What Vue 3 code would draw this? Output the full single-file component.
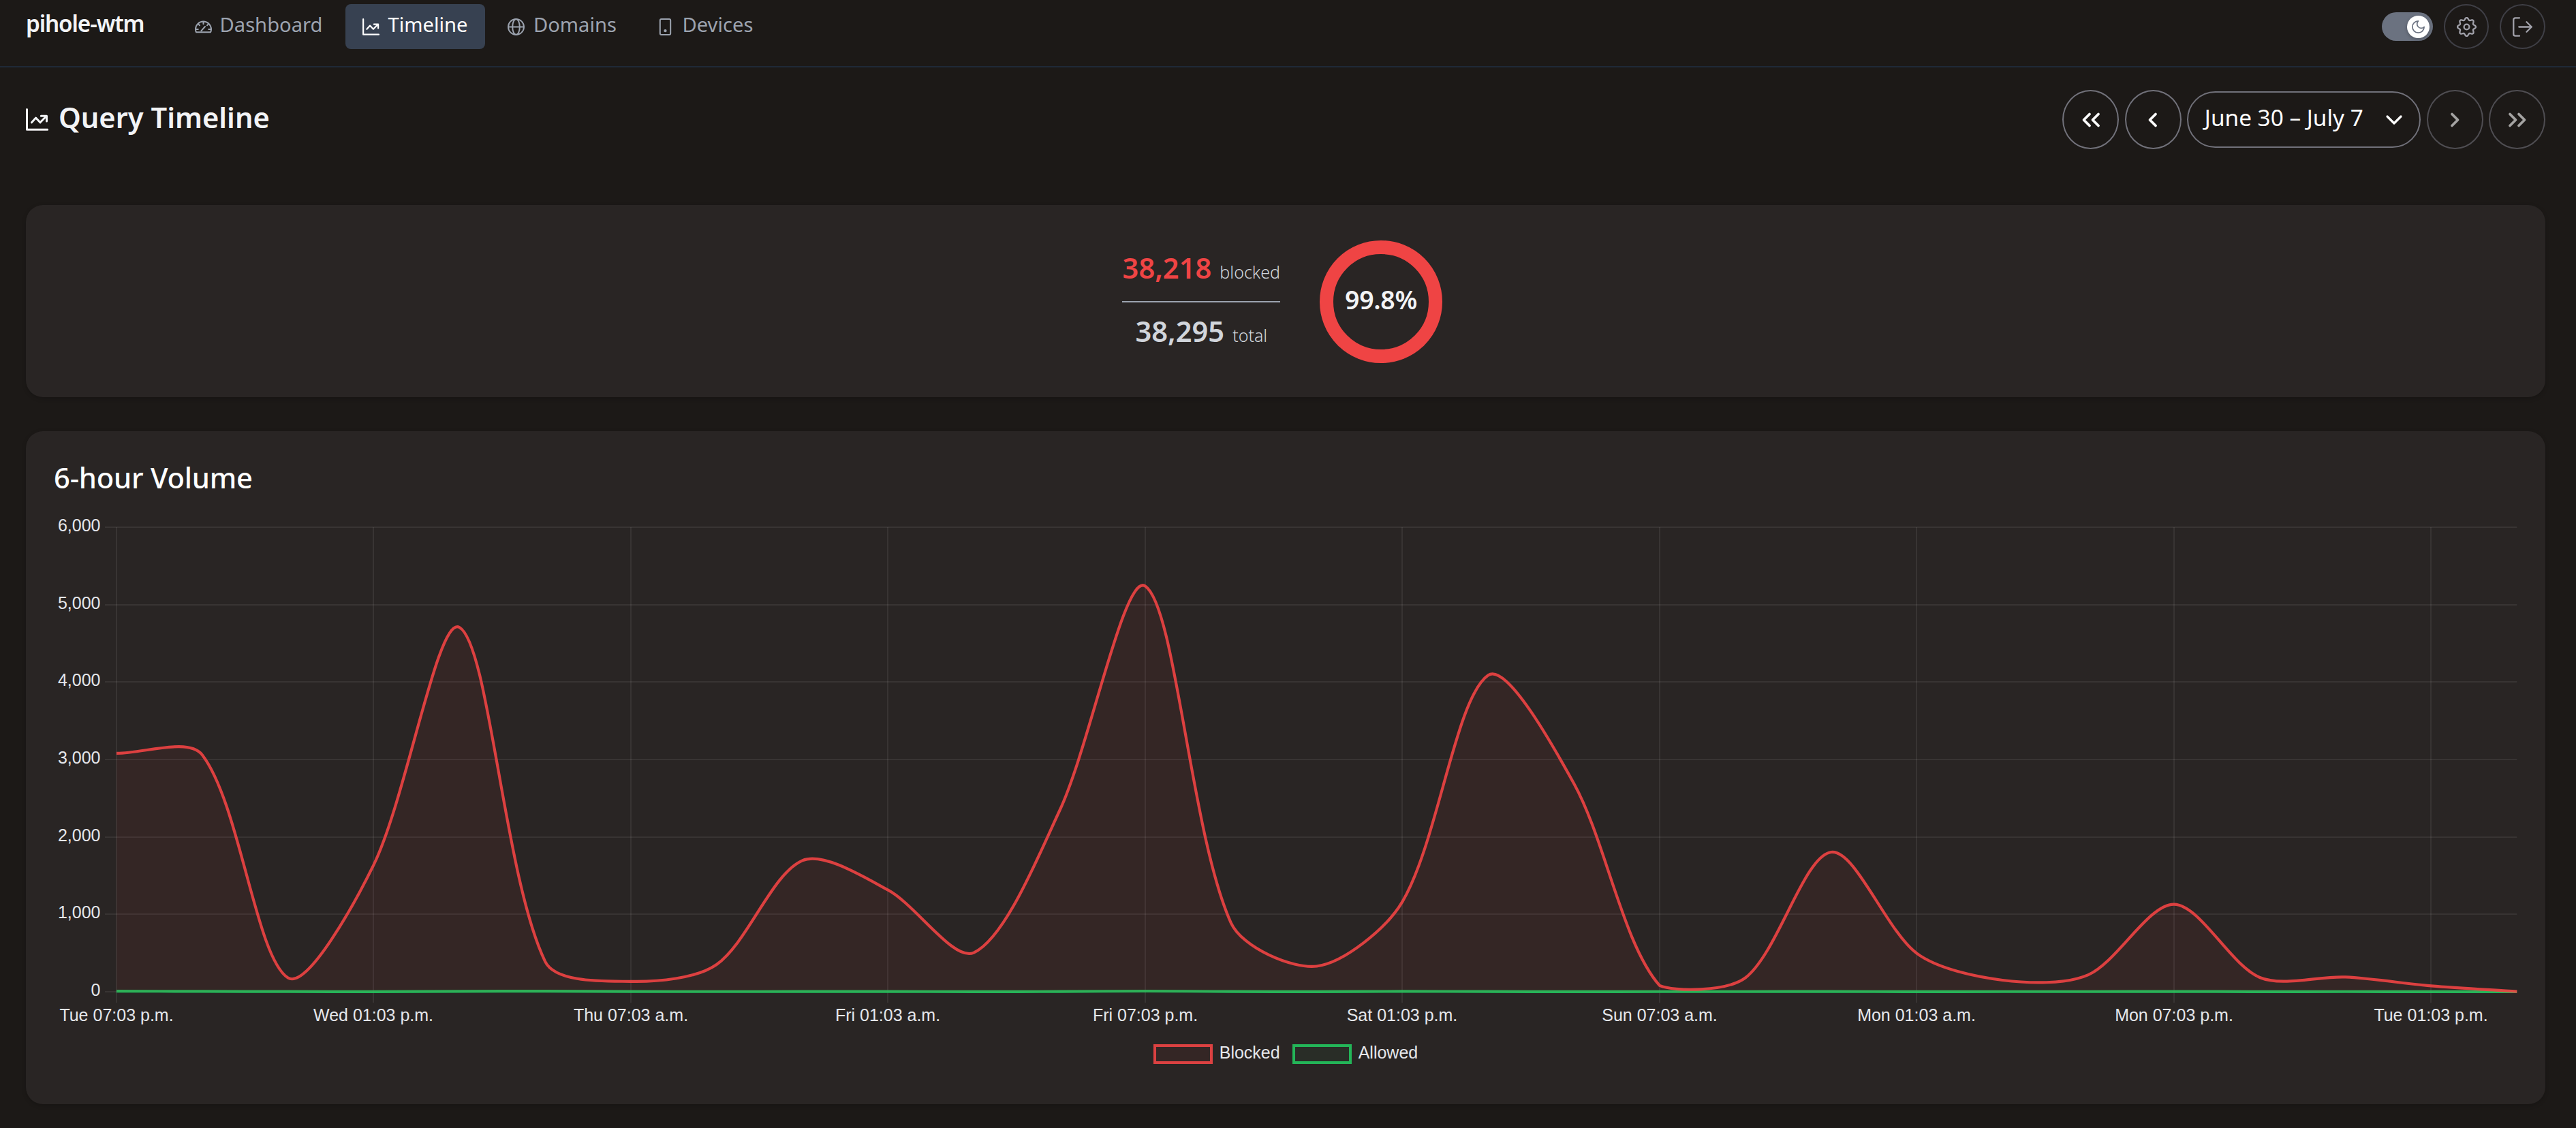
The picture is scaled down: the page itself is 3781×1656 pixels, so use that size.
<script setup>
const CHART = { left: 171, right: 3694.3, top: 774, bottom: 1456, max: 6000 }

const blocked = [
  3080, 3060, 180, 1640, 4707, 391, 133, 352, 1695, 1314, 505, 2338, 5240, 890, 330,
  1165, 4088, 2690, 80, 180, 1803, 496, 150, 219, 1130, 185, 190, 76, 3,
]
const allowed = [8, 5, 3, 1, 5, 8, 3, 2, 3, 4, 1, 3, 9, 3, 1, 5, 3, 1, 2, 2, 3, 1, 2, 2, 4, 1, 2, 1, 0]

const labels = [
  'Tue 07:03 p.m.', 'Wed 01:03 p.m.', 'Thu 07:03 a.m.', 'Fri 01:03 a.m.', 'Fri 07:03 p.m.',
  'Sat 01:03 p.m.', 'Sun 07:03 a.m.', 'Mon 01:03 a.m.', 'Mon 07:03 p.m.', 'Tue 01:03 p.m.',
]

const step = (CHART.right - CHART.left) / (blocked.length - 1)
const xAt = (i) => CHART.left + i * step
const yAt = (v) => CHART.bottom - (v / CHART.max) * (CHART.bottom - CHART.top)

const xTicks = labels.map((text, i) => ({ text, x: Math.round(xAt(i * 3)) }))
const yTicks = [6000, 5000, 4000, 3000, 2000, 1000, 0].map((v) => ({
  text: v.toLocaleString('en-US'),
  y: Math.round(yAt(v)),
}))

// Cardinal-like spline whose control points stay inside the plot area.
function curve(values, tension = 0.3) {
  const pts = values.map((v, i) => ({ x: xAt(i), y: yAt(v) }))
  const clamp = (y) => Math.min(CHART.bottom, Math.max(CHART.top, y))
  const ctrl = pts.map((p, i) => {
    const a = pts[Math.max(0, i - 1)]
    const b = pts[Math.min(pts.length - 1, i + 1)]
    const d1 = Math.hypot(p.x - a.x, p.y - a.y)
    const d2 = Math.hypot(b.x - p.x, b.y - p.y)
    const f1 = (tension * d1) / (d1 + d2)
    const f2 = (tension * d2) / (d1 + d2)
    return {
      inX: p.x - f1 * (b.x - a.x),
      inY: clamp(p.y - f1 * (b.y - a.y)),
      outX: p.x + f2 * (b.x - a.x),
      outY: clamp(p.y + f2 * (b.y - a.y)),
    }
  })
  let d = `M${pts[0].x} ${pts[0].y}`
  for (let i = 1; i < pts.length; i++) {
    const o = ctrl[i - 1]
    const c = ctrl[i]
    d += `C${o.outX} ${o.outY} ${c.inX} ${c.inY} ${pts[i].x} ${pts[i].y}`
  }
  return d
}

const blockedLine = curve(blocked)
const allowedLine = curve(allowed)
const close = `L${CHART.right} ${CHART.bottom}L${CHART.left} ${CHART.bottom}Z`

// Eight-lobed cog outline
const cog = (() => {
  let d = ''
  for (let i = 0; i < 160; i++) {
    const t = (i / 160) * Math.PI * 2
    const r = 11.9 + 1.6 * Math.cos(8 * t)
    d += `${i ? 'L' : 'M'}${(14.5 + r * Math.sin(t)).toFixed(2)} ${(14.5 - r * Math.cos(t)).toFixed(2)}`
  }
  return d + 'Z'
})()
</script>

<template>
  <div class="page">
    <header class="topbar">
      <span class="brand">pihole-wtm</span>
      <nav class="nav">
        <a class="nav-item">
          <svg class="nav-icon" viewBox="0 0 25 25">
            <path d="M2 20.3C1.2 18.8 1 17.4 1 16A11.5 11.5 0 0 1 24 16C24 17.4 23.8 18.8 23 20.3Z" />
            <path d="M9.3 18.3L15 12M12.5 5V8.2M5.2 8.4L7 10.2M19.8 8.4L18 10.2M1.5 16H4.8M20.2 16H23.5" />
          </svg>
          <span>Dashboard</span>
        </a>
        <a class="nav-item active">
          <svg class="nav-icon bold" viewBox="0 0 33 33">
            <path d="M1.5 1.5V31.2H31.8M8.5 20.8L14.6 14L21 20.8L30.3 11.3M22.3 11.3H30.5V19" />
          </svg>
          <span>Timeline</span>
        </a>
        <a class="nav-item">
          <svg class="nav-icon" viewBox="0 0 25 25">
            <circle cx="12.5" cy="12.5" r="11.5" />
            <ellipse cx="12.5" cy="12.5" rx="5.3" ry="11.5" />
            <path d="M1 12.5H24" />
          </svg>
          <span>Domains</span>
        </a>
        <a class="nav-item">
          <svg class="nav-icon" viewBox="0 0 25 25">
            <rect x="4.8" y="1" width="15.4" height="23" rx="2" />
            <circle class="dot" cx="12.5" cy="18.2" r="2.1" />
          </svg>
          <span>Devices</span>
        </a>
      </nav>
      <div class="tools">
        <span class="toggle">
          <span class="knob">
            <svg viewBox="0 0 24 24"><path d="M12 3a6 6 0 0 0 9 9 9 9 0 1 1-9-9Z" /></svg>
          </span>
        </span>
        <button class="tool">
          <svg viewBox="0 0 29 29"><path :d="cog" /><circle cx="14.5" cy="14.5" r="3.9" /></svg>
        </button>
        <button class="tool">
          <svg viewBox="0 0 29 29">
            <path d="M10 1.3H4Q1.3 1.3 1.3 4V25Q1.3 27.7 4 27.7H10M9.3 14.5H27.8M20.5 7.2L27.8 14.5L20.5 21.8" />
          </svg>
        </button>
      </div>
    </header>

    <div class="heading">
      <svg class="heading-icon" viewBox="0 0 33 33">
        <path d="M1.5 1.5V31.2H31.8M8.5 20.8L14.6 14L21 20.8L30.3 11.3M22.3 11.3H30.5V19" />
      </svg>
      <h1>Query Timeline</h1>
      <div class="pager">
        <button class="page-btn"><svg viewBox="0 0 32 24"><path d="M14 3.5L5.5 12L14 20.5M27 3.5L18.5 12L27 20.5" /></svg></button>
        <button class="page-btn"><svg viewBox="0 0 32 24"><path d="M20 3.5L11.5 12L20 20.5" /></svg></button>
        <div class="range">
          <span>June 30 – July 7</span>
          <svg viewBox="0 0 26 16"><path d="M3 3L13 13L23 3" /></svg>
        </div>
        <button class="page-btn off"><svg viewBox="0 0 32 24"><path d="M12 3.5L20.5 12L12 20.5" /></svg></button>
        <button class="page-btn off"><svg viewBox="0 0 32 24"><path d="M5 3.5L13.5 12L5 20.5M18 3.5L26.5 12L18 20.5" /></svg></button>
      </div>
    </div>

    <section class="card summary">
      <div class="figures">
        <p><b class="red">38,218</b><span>blocked</span></p>
        <hr />
        <p class="total"><b>38,295</b><span>total</span></p>
      </div>
      <div class="donut"><span>99.8%</span></div>
    </section>

    <section class="card volume">
      <h2>6-hour Volume</h2>
      <svg class="chart" viewBox="80 742 3615 768">
        <g class="grid">
          <path v-for="t in yTicks" :key="t.text" :d="`M154 ${t.y}H${CHART.right}`" />
          <path v-for="t in xTicks" :key="t.text" :d="`M${t.x} ${CHART.top}V1472`" />
        </g>
        <path class="allowed-fill" :d="allowedLine + close" />
        <path class="allowed-line" :d="allowedLine" />
        <path class="blocked-fill" :d="blockedLine + close" />
        <path class="blocked-line" :d="blockedLine" />
        <g class="tick-text">
          <text v-for="t in yTicks" :key="t.text" x="147.5" :y="t.y + 6" text-anchor="end">{{ t.text }}</text>
          <text v-for="t in xTicks" :key="t.text" :x="t.x" y="1499" text-anchor="middle">{{ t.text }}</text>
        </g>
      </svg>
      <div class="legend">
        <span class="swatch swatch-blocked"></span><span class="name">Blocked</span>
        <span class="swatch swatch-allowed"></span><span class="name">Allowed</span>
      </div>
    </section>
  </div>
</template>

<style>
html,
body {
  margin: 0;
  background: #1c1917;
  overflow: hidden;
}
</style>

<style scoped>
.page {
  box-sizing: border-box;
  width: 3781px;
  height: 1656px;
  overflow: hidden;
  background: #1c1917;
  color: #f3f4f6;
  font-family: "Noto Sans", sans-serif;
}
* {
  box-sizing: border-box;
}
svg {
  fill: none;
  stroke: currentColor;
  stroke-linecap: round;
  stroke-linejoin: round;
  flex: none;
  display: block;
}
button {
  padding: 0;
  background: none;
  color: inherit;
}

.topbar {
  display: flex;
  align-items: flex-start;
  height: 99px;
  padding: 6px 45px 0 38px;
  border-bottom: 2px solid #1f2937;
}
.brand {
  width: 227px;
  font-size: 33.33px;
  font-weight: 600;
  line-height: 57px;
  letter-spacing: -1.15px;
}
.nav {
  display: flex;
  gap: 8px;
}
.nav-item {
  display: flex;
  align-items: center;
  gap: 12.5px;
  height: 66px;
  padding: 0 26px 0 25px;
  border-radius: 8px;
  font-size: 29.17px;
  color: #9ca3af;
}
.nav-item:first-child {
  gap: 11.5px;
  padding: 0 25.5px 0 21px;
}
.nav-item span {
  padding-bottom: 7px;
}
.nav-item.active {
  background: #374151;
  color: #fff;
}
.nav-icon {
  width: 25px;
  height: 25px;
  stroke-width: 2;
}
.nav-icon.bold {
  stroke-width: 2.9;
}
.dot {
  fill: currentColor;
  stroke: none;
}
.tools {
  display: flex;
  align-items: center;
  gap: 16px;
  margin-left: auto;
}
.toggle {
  display: flex;
  align-items: center;
  justify-content: flex-end;
  width: 75px;
  height: 42px;
  padding-right: 5px;
  border-radius: 21px;
  background: #6b7280;
}
.knob {
  display: flex;
  align-items: center;
  justify-content: center;
  width: 33px;
  height: 33px;
  border-radius: 50%;
  background: #fff;
  color: #6b7280;
  box-shadow: 0 2px 5px rgba(0, 0, 0, 0.25);
}
.knob svg {
  width: 23px;
  height: 23px;
  stroke-width: 1.8;
}
.tool {
  display: flex;
  align-items: center;
  justify-content: center;
  width: 66.6px;
  height: 66px;
  border: 2px solid #3f3f46;
  border-radius: 50%;
  color: #a1a1aa;
}
.tool svg {
  width: 29px;
  height: 29px;
  stroke-width: 2.3;
}

.heading {
  display: flex;
  align-items: center;
  height: 87px;
  margin-top: 33px;
  padding: 0 45px 0 38px;
}
.heading-icon {
  width: 33px;
  height: 33px;
  stroke-width: 3;
}
h1,
h2,
p {
  margin: 0;
}
h1 {
  padding-bottom: 7px;
  margin-left: 15px;
  font-size: 41.67px;
  font-weight: 600;
  line-height: 58px;
}
.pager {
  display: flex;
  align-items: center;
  gap: 8.33px;
  margin-left: auto;
  color: #fff;
}
.page-btn {
  display: flex;
  align-items: center;
  justify-content: center;
  width: 83px;
  height: 87px;
  border: 2px solid #71717a;
  border-radius: 50%;
}
.page-btn svg {
  width: 32px;
  height: 24px;
  stroke-width: 3.8;
}
.page-btn.off {
  opacity: 0.6;
}
.range {
  display: flex;
  align-items: center;
  justify-content: space-between;
  width: 343.5px;
  height: 83px;
  padding: 0 24px;
  border: 2px solid #71717a;
  border-radius: 42px;
  font-size: 33.33px;
}
.range span {
  padding-bottom: 7px;
}
.range svg {
  width: 26px;
  height: 16px;
  stroke-width: 3.2;
}

.card {
  margin: 0 45px 0 38px;
  border-radius: 25px;
  background: #292524;
  box-shadow: 0 2px 6px rgba(0, 0, 0, 0.2);
}
.summary {
  display: flex;
  align-items: center;
  justify-content: center;
  gap: 58px;
  height: 282px;
  margin-top: 82px;
  padding-right: 10px;
}
.figures {
  width: 232px;
}
.figures p {
  display: flex;
  align-items: baseline;
  justify-content: center;
  gap: 12px;
  line-height: 58px;
  white-space: nowrap;
}
.figures b {
  font-size: 41.67px;
  font-weight: 600;
  color: #d1d5db;
}
.figures b.red {
  color: #ef4444;
}
.figures span {
  font-size: 25px;
  font-weight: 300;
  color: #d1d5db;
}
.figures hr {
  height: 2px;
  margin: 14.5px 0 12.5px;
  border: 0;
  background: #9ca3af;
}
.donut {
  display: flex;
  align-items: center;
  justify-content: center;
  width: 179.5px;
  height: 179.5px;
  margin-top: 2px;
  border: 20px solid #ef4444;
  border-radius: 50%;
}
.donut span {
  padding-bottom: 7px;
  font-size: 37.5px;
  font-weight: 600;
  letter-spacing: -0.3px;
}

.volume {
  height: 988px;
  margin-top: 50px;
  padding: 41px 0 0 42px;
}
h2 {
  height: 68px;
  margin-left: -1px;
  font-size: 41.67px;
  font-weight: 500;
  line-height: 53px;
  letter-spacing: -0.2px;
  color: #fff;
}
.chart {
  width: 3615px;
  height: 768px;
  stroke-linecap: butt;
}
.grid {
  stroke: rgba(255, 255, 255, 0.07);
  stroke-width: 2;
}
.blocked-fill {
  fill: rgba(239, 68, 68, 0.06);
  stroke: none;
}
.allowed-fill {
  fill: rgba(34, 197, 94, 0.05);
  stroke: none;
}
.blocked-line {
  stroke: rgba(239, 68, 68, 0.9);
  stroke-width: 4.17;
}
.allowed-line {
  stroke: rgba(34, 197, 94, 0.9);
  stroke-width: 4.17;
}
.tick-text {
  fill: #e5e7eb;
  stroke: none;
  font: 25px "Liberation Sans", Arial, sans-serif;
}
.legend {
  display: flex;
  align-items: center;
  justify-content: center;
  height: 29px;
  margin-top: 23px;
  padding-right: 42px;
  font: 25px "Liberation Sans", Arial, sans-serif;
  color: #e5e7eb;
}
.swatch {
  width: 87.5px;
  height: 29px;
  border: 4.17px solid;
}
.swatch-blocked {
  border-color: #db4141;
  background: #342625;
}
.swatch-allowed {
  border-color: #23b558;
  background: #292d27;
}
.name {
  padding: 0 18px 5px 9.5px;
}
.name:last-child {
  padding-right: 0;
}
</style>
